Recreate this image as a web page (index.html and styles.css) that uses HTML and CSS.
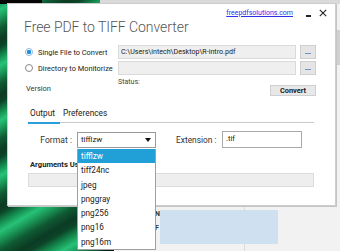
FILE: index.html
```html
<!DOCTYPE html>
<html>
<head>
<meta charset="utf-8">
<link rel="stylesheet" href="styles.css">
</head>
<body>
<div class="desktop">
  <div class="wall"></div>
  <div class="topstrip"></div>
  <div class="scrollbit"></div>
  <span class="frag f1">N</span>
  <span class="frag f2">F</span>
  <div class="vline"></div>
  <div class="bluebox"></div>

  <div class="window">
    <div class="topbar">
      <a class="link" href="#">freepdfsolutions.com</a>
      <span class="min"></span>
      <svg class="close" width="8" height="8" viewBox="0 0 8 8"><path d="M0.8 0.8 L7.2 7.2 M7.2 0.8 L0.8 7.2" stroke="#222" stroke-width="1.1" fill="none"/></svg>
    </div>
    <h1 class="title">Free PDF to TIFF Converter</h1>

    <div class="source">
      <label class="radio"><span class="dot on"></span>Single File to Convert</label>
      <div class="field">C:\Users\intech\Desktop\R-intro.pdf</div>
      <button class="browse">...</button>
      <label class="radio"><span class="dot"></span>Directory to Monitorize</label>
      <div class="field"></div>
      <button class="browse">...</button>
    </div>

    <div class="statusrow">
      <span class="version">Version</span>
      <span class="status">Status:</span>
      <button class="convert">Convert</button>
    </div>

    <div class="tabs">
      <span class="tab active">Output</span>
      <span class="tab">Preferences</span>
    </div>

    <div class="formatrow">
      <span class="flabel">Format :</span>
      <div class="select">tifflzw<span class="arrow"></span></div>
      <span class="elabel">Extension :</span>
      <div class="ext">.tif</div>
    </div>

    <div class="args">Arguments Used</div>
    <div class="argfield"></div>

    <ul class="dropdown">
      <li class="sel">tifflzw</li>
      <li>tiff24nc</li>
      <li>jpeg</li>
      <li>pnggray</li>
      <li>png256</li>
      <li>png16</li>
      <li>png16m</li>
    </ul>
  </div>
</div>
</body>
</html>
```
FILE: styles.css
```css
* { box-sizing: border-box; margin: 0; padding: 0; }
html, body { width: 340px; height: 251px; overflow: hidden; }
body { font-family: Roboto, "Liberation Sans", sans-serif; color: #2a2a2a; background: #f2f2f2; }

.desktop { position: relative; width: 340px; height: 251px; overflow: hidden; background: #f2f2f2; }

.wall {
  position: absolute; left: 0; top: 0; width: 114px; height: 251px;
  background:
    linear-gradient(to right, transparent 0 98px, #0a2418 104px, #06140d 114px) 0 205px / 114px 46px no-repeat,
    linear-gradient(to right, #060606 0 42px, transparent 42px) 0 0 / 114px 4px no-repeat,
    repeating-linear-gradient(-30deg, #0b3b23 0, #0f5a33 10px, #1c9f5c 20px, #27c177 26px, #169052 33px, #0c4428 42px, #0b3b23 48px),
    #0d4a2a;
}
.topstrip { position: absolute; left: 100px; top: 0; width: 240px; height: 4px; background: #dadada; }
.scrollbit { position: absolute; left: 336px; top: 30px; width: 4px; height: 35px; background: #d0d0d0; }
.frag { position: absolute; left: 155px; font-size: 7px; font-weight: bold; color: #333; line-height: 8px; }
.f1 { top: 210px; }
.f2 { top: 224px; }
.vline { position: absolute; left: 244px; top: 205px; width: 1px; height: 46px; background: #dcdcdc; }
.bluebox { position: absolute; left: 160px; top: 210px; width: 118px; height: 34px; background: #cfe0f1; }

.window {
  position: absolute; left: 8px; top: 4px; width: 327px; height: 201px;
  background: #fff;
  box-shadow: 0 0 0 1px #cdcdcd, 1px 1px 0 1px #c4c4c4;
}

.topbar { height: 15px; display: flex; justify-content: flex-end; align-items: center; padding-top: 3px; padding-right: 8px; }
.link { font-size: 7px; color: #2f2fe8; text-decoration: underline; line-height: 9px; margin-right: 13px; }
.min { width: 5px; height: 1.5px; background: #222; margin-top: 6px; margin-right: 8px; }
.close { display: block; }

.title { font-size: 14px; font-weight: 300; line-height: 16px; color: #555; margin-left: 16px; letter-spacing: -0.05px; }

.source {
  margin-top: 10px; display: grid;
  grid-template-columns: 93px 178px 20px; grid-template-rows: 14px 14px; row-gap: 2px;
  padding-left: 17px;
}
.radio { display: flex; align-items: center; font-size: 7.4px; color: #222; white-space: nowrap; }
.dot { width: 8px; height: 8px; border-radius: 50%; border: 1px solid #8a8a8a; margin-right: 5px; background: #fff; flex: none; }
.dot.on { border-color: #8fb8dc; background: radial-gradient(circle, #1f8fe0 0 2px, #fff 2.4px); }
.field { background: #efefef; border: 1px solid #dadada; font-size: 7.1px; line-height: 12px; padding-left: 2px; color: #222; white-space: nowrap; overflow: hidden; }
.browse { margin-left: 4px; width: 16px; height: 14px; background: #e5e5e5; border: 1px solid #cfcfcf; font-family: inherit; font-size: 7px; font-weight: bold; line-height: 10px; color: #222; }

.statusrow { margin-top: 1px; height: 20px; display: flex; padding-left: 18px; }
.version { width: 92px; align-self: flex-end; font-size: 7.4px; line-height: 12px; margin-bottom: 1px; color: #333; }
.status { align-self: flex-start; font-size: 7px; line-height: 12px; color: #444; flex: 1; }
.convert { align-self: flex-end; width: 46px; height: 11px; margin-right: 19px; background: #e8e8e8; border: 1px solid #cfcfcf; font-family: inherit; font-weight: bold; font-size: 7.4px; line-height: 9px; color: #222; }

.tabs { margin: 11px 0 0 20px; width: 286px; height: 16px; border-bottom: 1px solid #c9c9c9; display: flex; }
.tab { font-size: 8.3px; line-height: 12px; color: #222; padding: 0 2px; position: relative; }
.tab.active { padding: 0 5px 0 2px; margin-right: 1px; }
.tab.active::after { content: ""; position: absolute; left: 0; right: 0; bottom: -2px; height: 2px; background: #2a9fdc; }

.formatrow { margin-top: 8px; height: 17px; display: flex; align-items: center; }
.flabel { width: 64px; text-align: right; font-size: 8.6px; color: #333; margin-right: 5px; }
.select { width: 79px; height: 16px; margin-top: 1px; border: 1px solid #9a9a9a; background: #fff; font-size: 8px; line-height: 14px; padding-left: 3px; position: relative; color: #222; }
.arrow { position: absolute; right: 4px; top: 5px; width: 0; height: 0; border-left: 3.5px solid transparent; border-right: 3.5px solid transparent; border-top: 4px solid #111; }
.elabel { margin-left: 20px; width: 46px; font-size: 8.4px; color: #333; }
.ext { width: 80px; height: 17px; border: 1px solid #a8a8a8; background: #fff; font-size: 7.6px; line-height: 14px; padding-left: 3px; color: #222; }

.args { margin: 11px 0 0 22px; font-size: 7.6px; font-weight: bold; line-height: 12px; color: #222; }
.argfield { margin: 2px 0 0 20px; width: 286px; height: 14px; background: #eeeeee; border: 1px solid #dcdcdc; }

.dropdown { position: absolute; left: 69px; top: 145px; width: 79px; list-style: none; background: #fff; border: 1px solid #a0a0a0; border-top: none; }
.dropdown li { height: 14.3px; line-height: 14.3px; font-size: 8.2px; padding-left: 3px; color: #222; }
.dropdown li.sel { background: #21a0d8; color: #fff; }
```
